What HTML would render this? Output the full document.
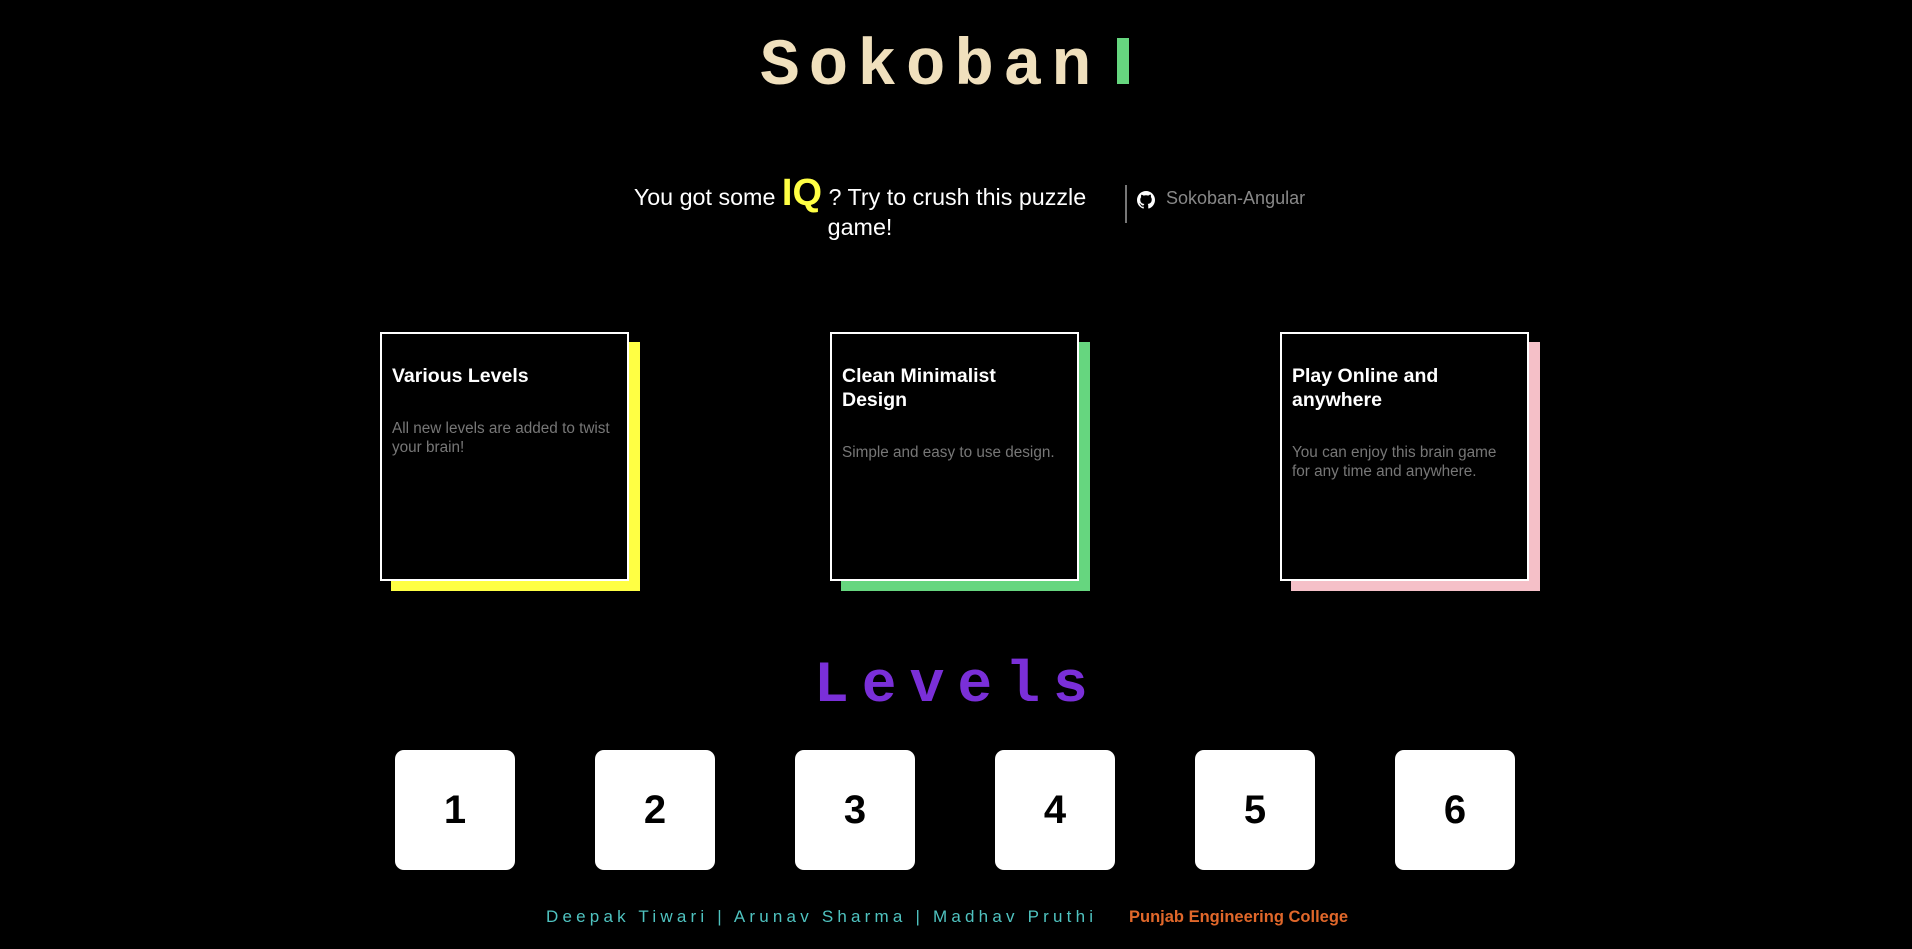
<!DOCTYPE html>
<html><head><meta charset="utf-8"><style>
*{margin:0;padding:0;box-sizing:border-box}
body{width:1912px;height:949px;background:#000;font-family:"Liberation Sans",sans-serif;position:relative;overflow:hidden}
.abs{position:absolute}
.title{left:760px;top:32px;font-family:"Liberation Mono",monospace;font-weight:bold;font-size:66px;color:#f0e0bd;letter-spacing:9px;line-height:70px}
.bar{left:1117px;top:38px;width:12px;height:46px;background:#66d67f}
.sub{left:617px;width:486px;top:178px;text-align:center;color:#fff;font-size:23.3px;line-height:30px}
.iq{color:#ffff44;font-weight:bold;font-size:38px}
.div{left:1125px;top:185px;width:2px;height:38px;background:#777}
.gh{left:1166px;top:188px;color:#888;font-size:18px}
.card{width:249px;height:249px;border:2px solid #fff;background:#000;padding:30px 10px}
.sh{width:249px;height:249px}
.card h3{color:#fff;font-size:19.5px;line-height:24px;font-weight:bold}
.card p{color:#777;font-size:15.3px;line-height:19px;margin-top:31px}
.lv{left:814px;top:654px;font-family:"Liberation Mono",monospace;font-weight:bold;font-size:58px;color:#7a2fd8;letter-spacing:13px}
.box{width:120px;height:120px;background:#fff;border-radius:9px;top:750px;text-align:center;line-height:120px;font-size:40px;font-weight:bold;color:#000}
.foot{top:907px;left:546px;font-size:17px;color:#4fc3c0;letter-spacing:4.2px}
.pec{top:908px;left:1129px;font-size:16.5px;color:#e0672a;font-weight:bold}
</style></head><body>
<div class="abs title">Sokoban</div>
<div class="abs bar"></div>
<div class="abs sub">You got some <span class="iq">IQ</span> ? Try to crush this puzzle game!</div>
<div class="abs div"></div>
<svg class="abs" style="left:1137px;top:191px" width="18" height="18" viewBox="0 0 16 16"><path fill="#fff" d="M8 0C3.58 0 0 3.58 0 8c0 3.54 2.29 6.53 5.47 7.59.4.07.55-.17.55-.38v-1.33c-2.23.48-2.7-1.07-2.7-1.07-.36-.93-.89-1.17-.89-1.17-.73-.5.06-.49.06-.49.8.06 1.23.82 1.23.82.72 1.22 1.87.87 2.33.66.07-.52.28-.87.51-1.07-1.78-.2-3.64-.89-3.64-3.95 0-.87.31-1.59.82-2.15-.08-.2-.36-1.02.08-2.12 0 0 .67-.21 2.2.82A7.6 7.6 0 0 1 8 3.8c.68 0 1.36.09 2 .27 1.53-1.04 2.2-.82 2.2-.82.44 1.1.16 1.92.08 2.12.51.56.82 1.27.82 2.15 0 3.07-1.87 3.75-3.65 3.95.29.25.54.73.54 1.48v2.2c0 .21.15.46.55.38A8 8 0 0 0 16 8c0-4.42-3.58-8-8-8z"/></svg>
<div class="abs gh">Sokoban-Angular</div>

<div class="abs sh" style="left:391px;top:342px;background:#ffff44"></div>
<div class="abs card" style="left:380px;top:332px"><h3>Various Levels</h3><p>All new levels are added to twist your brain!</p></div>
<div class="abs sh" style="left:841px;top:342px;background:#66d67f"></div>
<div class="abs card" style="left:830px;top:332px"><h3>Clean Minimalist<br>Design</h3><p>Simple and easy to use design.</p></div>
<div class="abs sh" style="left:1291px;top:342px;background:#f5c0c8"></div>
<div class="abs card" style="left:1280px;top:332px"><h3>Play Online and anywhere</h3><p>You can enjoy this brain game for any time and anywhere.</p></div>

<div class="abs lv">Levels</div>
<div class="abs box" style="left:395px">1</div>
<div class="abs box" style="left:595px">2</div>
<div class="abs box" style="left:795px">3</div>
<div class="abs box" style="left:995px">4</div>
<div class="abs box" style="left:1195px">5</div>
<div class="abs box" style="left:1395px">6</div>

<div class="abs foot">Deepak Tiwari | Arunav Sharma | Madhav Pruthi</div>
<div class="abs pec">Punjab Engineering College</div>
</body></html>
